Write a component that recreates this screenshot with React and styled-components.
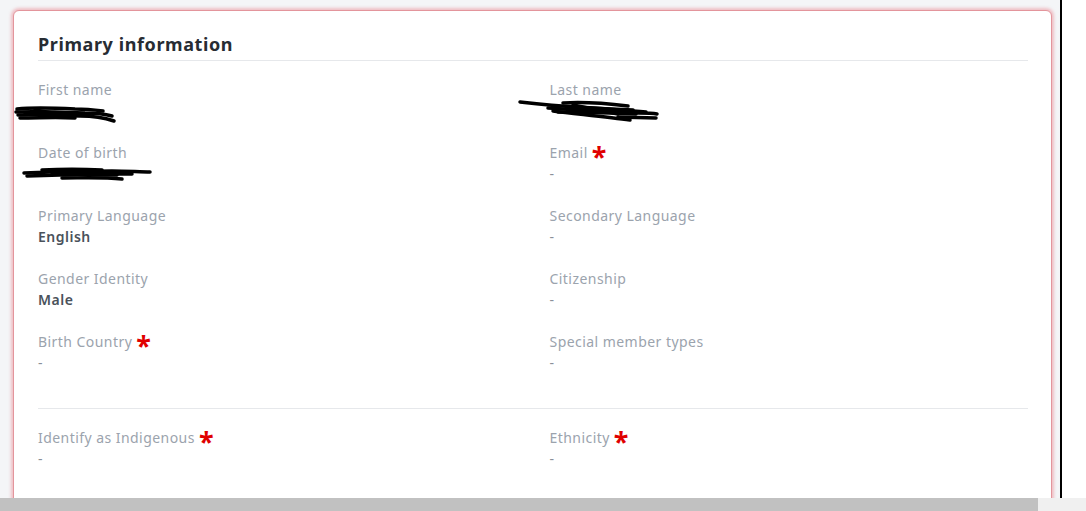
import React from "react";
import styled, { createGlobalStyle } from "styled-components";

const GlobalStyle = createGlobalStyle`
  * { box-sizing: border-box; }
  html, body { margin: 0; padding: 0; background: #ffffff; }
  body {
    font-family: "Noto Sans", "Open Sans", sans-serif;
    -webkit-font-smoothing: antialiased;
  }
`;

const Screen = styled.div`
  width: 1086px;
  height: 511px;
  display: grid;
  grid-template-rows: 1fr 13px;
  overflow: hidden;
`;

const Top = styled.div`
  display: flex;
  min-height: 0;
`;

const Viewport = styled.div`
  width: 1060px;
  flex-shrink: 0;
  background: #f4f5f7;
  padding: 10px 8px 0 13px;
  overflow: hidden;
`;

const Edge = styled.div`
  width: 2px;
  background: #000000;
`;

const Filler = styled.div`
  flex: 1;
  background: #ffffff;
`;

const Scrollbar = styled.div`
  display: flex;
  background: #f0f0f0;
`;

const Thumb = styled.div`
  width: 1038px;
  background: #c1c1c1;
`;

const Card = styled.section`
  background: #ffffff;
  border: 1px solid #e3959c;
  border-radius: 6px;
  box-shadow: 0 0 3px 2px rgba(236, 140, 150, 0.5);
  padding: 21px 23px 40px 24px;
  min-height: 560px;
`;

const Heading = styled.h2`
  margin: 0;
  padding-bottom: 4px;
  font-size: 18px;
  line-height: 24px;
  font-weight: 700;
  letter-spacing: 0.6px;
  color: #272c33;
  border-bottom: 1px solid #e6e8eb;
`;

const Fields = styled.div`
  display: grid;
  grid-template-columns: 1fr 1fr;
  column-gap: 33px;
  row-gap: 19px;
  padding: 17px 0 ${(p) => (p.$last ? "0" : "34px")};
  border-bottom: ${(p) => (p.$last ? "none" : "1px solid #e6e8eb")};
`;

const Field = styled.div`
  display: flex;
  flex-direction: column;
`;

const Label = styled.div`
  display: flex;
  align-items: center;
  gap: 4px;
  height: 22px;
  font-size: 14px;
  letter-spacing: 0.45px;
  color: #9ba3ad;
`;

const Star = styled.span`
  color: #e00000;
  font-size: 27px;
  font-weight: 700;
  line-height: 1;
  margin-top: 8px;
`;

const Value = styled.div`
  position: relative;
  height: 22px;
  font-size: 14px;
  line-height: 22px;
  letter-spacing: 0.5px;
  font-weight: ${(p) => (p.$empty ? 400 : 600)};
  color: ${(p) => (p.$empty ? "#8a9099" : "#4a525b")};
`;

const Scribble = styled.svg`
  position: absolute;
  overflow: visible;
`;

const scribbles = {
  first: {
    left: -23,
    top: 3,
    width: 100,
    height: 20,
    paths: [
      "M2 6 C 20 4, 40 5, 60 6 C 70 6, 80 7, 88 8",
      "M1 9 C 20 8, 45 9, 70 10 C 80 10, 90 11, 97 13",
      "M3 12 C 25 11, 45 12, 65 13 C 80 13, 90 15, 99 18",
      "M5 15 C 25 15, 40 14, 60 15",
      "M20 7 L 55 13",
      "M10 10 L 75 11",
      "M30 14 L 70 12",
    ],
  },
  last: {
    left: -32,
    top: -2,
    width: 140,
    height: 24,
    paths: [
      "M2 4 C 20 6, 40 8, 60 9 C 80 10, 100 12, 128 14",
      "M45 5 C 60 4, 85 5, 110 8",
      "M30 10 C 60 12, 90 13, 120 15 C 128 15, 134 15, 139 16",
      "M40 14 C 60 14, 90 15, 118 16",
      "M35 13 C 60 16, 90 19, 112 22",
      "M100 19 L 138 20",
      "M50 9 L 115 12",
      "M55 7 L 100 16",
    ],
  },
  dob: {
    left: -16,
    top: 1,
    width: 130,
    height: 18,
    paths: [
      "M2 9 C 30 8, 60 7, 90 7 C 105 7, 118 8, 128 8",
      "M5 12 C 30 11, 60 10, 95 11",
      "M20 6 C 40 5, 60 5, 80 6",
      "M40 14 C 60 14, 80 13, 100 15",
      "M60 10 L 110 10",
      "M30 9 L 100 9",
    ],
  },
};

const Redacted = ({ kind }) => {
  const s = scribbles[kind];
  return (
    <Scribble
      width={s.width}
      height={s.height}
      viewBox={`0 0 ${s.width} ${s.height}`}
      style={{ left: s.left, top: s.top }}
    >
      {s.paths.map((d, i) => (
        <path
          key={i}
          d={d}
          fill="none"
          stroke="#000"
          strokeWidth="3.5"
          strokeLinecap="round"
        />
      ))}
    </Scribble>
  );
};

const primary = [
  { label: "First name", redact: "first" },
  { label: "Last name", redact: "last" },
  { label: "Date of birth", redact: "dob" },
  { label: "Email", required: true, value: "-" },
  { label: "Primary Language", value: "English" },
  { label: "Secondary Language", value: "-" },
  { label: "Gender Identity", value: "Male" },
  { label: "Citizenship", value: "-" },
  { label: "Birth Country", required: true, value: "-" },
  { label: "Special member types", value: "-" },
];

const heritage = [
  { label: "Identify as Indigenous", required: true, value: "-" },
  { label: "Ethnicity", required: true, value: "-" },
];

const InfoField = ({ field }) => (
  <Field>
    <Label>
      {field.label}
      {field.required && <Star>*</Star>}
    </Label>
    <Value $empty={field.value === "-"}>
      {field.redact ? <Redacted kind={field.redact} /> : field.value}
    </Value>
  </Field>
);

export default function App() {
  return (
    <Screen>
      <GlobalStyle />
      <Top>
        <Viewport>
          <Card>
            <Heading>Primary information</Heading>
            <Fields>
              {primary.map((f) => (
                <InfoField key={f.label} field={f} />
              ))}
            </Fields>
            <Fields $last>
              {heritage.map((f) => (
                <InfoField key={f.label} field={f} />
              ))}
            </Fields>
          </Card>
        </Viewport>
        <Edge />
        <Filler />
      </Top>
      <Scrollbar>
        <Thumb />
      </Scrollbar>
    </Screen>
  );
}
